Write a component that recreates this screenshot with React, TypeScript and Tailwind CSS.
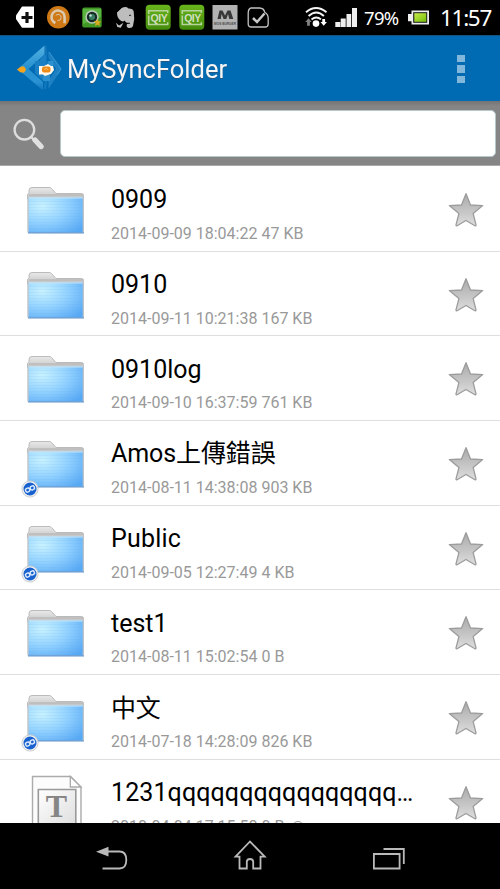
import React, { useState } from "react"

type Entry = {
    name: string
    info: string
    kind: "folder" | "shared" | "text"
    nameClass?: string
}

const entries: Entry[] = [
    { name: "0909", info: "2014-09-09 18:04:22 47 KB", kind: "folder" },
    { name: "0910", info: "2014-09-11 10:21:38 167 KB", kind: "folder" },
    { name: "0910log", info: "2014-09-10 16:37:59 761 KB", kind: "folder" },
    { name: "Amos上傳錯誤", info: "2014-08-11 14:38:08 903 KB", kind: "shared", nameClass: "tracking-[-0.1px]" },
    { name: "Public", info: "2014-09-05 12:27:49 4 KB", kind: "shared", nameClass: "tracking-[0.2px]" },
    { name: "test1", info: "2014-08-11 15:02:54 0 B", kind: "folder" },
    { name: "中文", info: "2014-07-18 14:28:09 826 KB", kind: "shared", nameClass: "tracking-[-0.3px]" },
    { name: "1231qqqqqqqqqqqqqqqq…", info: "2010-04-04 17:15:58 0 B", kind: "text", nameClass: "tracking-[0.1px]" },
]

function Gradients() {
    return (
        <svg className="absolute h-0 w-0" aria-hidden="true">
            <defs>
                <linearGradient id="tab" x1="0" y1="0" x2="0" y2="1">
                    <stop offset="0" stopColor="#e9e9e9" />
                    <stop offset="1" stopColor="#c4c4c4" />
                </linearGradient>
                <radialGradient id="front" cx="0.25" cy="0.25" r="0.95">
                    <stop offset="0" stopColor="#c9f2ff" />
                    <stop offset="0.5" stopColor="#93d2ff" />
                    <stop offset="1" stopColor="#58a9f4" />
                </radialGradient>
                <pattern id="lines" width="60" height="3" patternUnits="userSpaceOnUse">
                    <rect width="60" height="1" fill="#5aaef5" opacity="0.1" />
                </pattern>
                <linearGradient id="star" x1="0" y1="0" x2="0" y2="1">
                    <stop offset="0" stopColor="#aaaaaa" />
                    <stop offset="0.6" stopColor="#c8c8c8" />
                    <stop offset="1" stopColor="#dedede" />
                </linearGradient>
                <linearGradient id="paper" x1="0" y1="0" x2="1" y2="1">
                    <stop offset="0" stopColor="#ffffff" />
                    <stop offset="1" stopColor="#dddddd" />
                </linearGradient>
                <linearGradient id="logo" x1="0" y1="0" x2="0" y2="1">
                    <stop offset="0" stopColor="#55b3e2" />
                    <stop offset="0.5" stopColor="#2590d0" />
                    <stop offset="0.8" stopColor="#2a92d4" />
                    <stop offset="1" stopColor="#1174b9" />
                </linearGradient>
                <linearGradient id="charge" x1="0" y1="0" x2="1" y2="1">
                    <stop offset="0" stopColor="#c9ed4a" />
                    <stop offset="1" stopColor="#72bd08" />
                </linearGradient>
                <linearGradient id="qiy" x1="0" y1="0" x2="0" y2="1">
                    <stop offset="0" stopColor="#69b51c" />
                    <stop offset="1" stopColor="#438b0b" />
                </linearGradient>
            </defs>
        </svg>
    )
}

function FolderIcon({ shared }: { shared: boolean }) {
    return (
        <svg width="68" height="60" viewBox="0 0 68 60">
            <path d="M7.5 13V8.5l1.5-1.7V4.5Q9 1.5 12 1.5h17q1.5 0 2.5 1l4.5 5h25.5q2 0 2 2V13z" fill="url(#tab)" stroke="#b4b4b4" strokeWidth="0.9" />
            <path d="M9 9h54" stroke="#aeaeae" strokeWidth="1.2" />
            <path d="M7.3 10.5h56.7v36H7.3z" fill="#bfc3c7" />
            <path d="M8.7 11.5h54v35h-54z" fill="url(#front)" />
            <path d="M8.7 11.5h54v35h-54z" fill="url(#lines)" />
            <path d="M8.7 12h54" stroke="#d8f2ff" strokeWidth="0.8" />
            <path d="M8 46.8h56" stroke="#6195cd" strokeWidth="1.2" />
            {shared && (
                <g transform="translate(0 -3)">
                    <circle cx="10" cy="52" r="8.1" fill="#f1f1f1" stroke="#c2c5c9" strokeWidth="0.8" />
                    <circle cx="10" cy="52" r="6.5" fill="#1762cf" />
                    <g transform="rotate(-25 10 52)" fill="none" stroke="#dceaff" strokeWidth="1.4">
                        <rect x="5.3" y="50.1" width="4.2" height="3.8" rx="1.7" />
                        <rect x="10.5" y="50.1" width="4.2" height="3.8" rx="1.7" />
                        <path d="M9 52h2" />
                    </g>
                </g>
            )}
        </svg>
    )
}

function TextFileIcon() {
    return (
        <svg width="68" height="66" viewBox="0 0 68 66">
            <path d="M12.5 1.5h38L61 12v53H12.5z" fill="#fcfcfc" stroke="#ababab" strokeWidth="1.4" />
            <path d="M50.3 1.5V12H61z" fill="#ffffff" stroke="#aaaaaa" strokeWidth="1.3" />
            <path d="M18.3 14.5h37.5V52H18.3z" fill="url(#paper)" stroke="#999999" strokeWidth="1.6" />
            <text x="36.4" y="41.5" textAnchor="middle" fill="#858585" className="font-['Liberation_Serif',serif] text-[32px] font-bold">T</text>
        </svg>
    )
}

function Star() {
    return (
        <svg width="36" height="36" viewBox="0 0 36 36">
            <path d="M18 1.7l4.5 11.3 12.2.6-9.5 8 2.8 11.2q.1 1.3-1.1.9L18 28.5l-8.9 5.2q-1.2.3-1.1-.9l2.9-11.2-9.6-8 12.2-.6z" fill="url(#star)" stroke="#9c9c9c" strokeWidth="1.3" strokeLinejoin="round" />
        </svg>
    )
}

function StatusBar() {
    return (
        <div className="flex h-[35px] shrink-0 items-center bg-black text-white">
            <svg width="360" height="35" viewBox="0 0 360 35" className="shrink-0">
                {/* notifications */}
                <path d="M34 6.5v21.3H22L16 19v-3.5l6-9z" fill="#ffffff" />
                <path d="M27 12v11M21.5 17.5h11" stroke="#111111" strokeWidth="3.2" />
                <circle cx="58.3" cy="17.3" r="11.3" fill="#ce7816" />
                <path d="M55.4 23a6.5 6.5 0 1 1 9.2-5.8v6" fill="none" stroke="#dcc9af" strokeWidth="2.6" />
                <path d="M57.5 20.6q3.700.2 3.700-3.300a3.200 3.200 0 0 0-5.400-2" fill="none" stroke="#dcc9af" strokeWidth="1" />
                <rect x="82.2" y="7.6" width="19.5" height="20" rx="2.2" fill="#429824" />
                <path d="M83 9l18 0v8L83 24z" fill="#59b440" />
                <circle cx="92" cy="17" r="6.7" fill="#bdcbbb" />
                <circle cx="92" cy="17" r="5.2" fill="#152b26" />
                <circle cx="92" cy="17" r="3" fill="#397d64" />
                <circle cx="90.5" cy="15.5" r="1.2" fill="#c6ded3" />
                <path d="M97.5 19l1.2 2.3 2.7.2-2 1.8.5 2.8-2.4-1.3-2.5 1.1.7-2.8-1.8-2 2.7-.1z" fill="#d3a91d" />
                <g fill="#bdbdbd">
                    <path d="M117 12.8l5.2-5q4-1.7 6.3.8 4.7.2 5.2 2.9 1.4 7.2-.7 14.6-.8 2.4-4.5 1.8-2.2-.4-1.9-3 .5-1.6 3.1-.8v-1.3q-4.5.4-4.8-2.3-2.4 2.2-5-.5-2.9-2.4-2.9-7.2z" />
                    <path d="M122 8v5h-5z" />
                    <path d="M116 22.8l3 2.6 4.5-2.7-2.7 5-3.5-.6z" />
                </g>
                <path d="M129 15.7q1-1.4 2.2 0" fill="none" stroke="#222222" />
                {[145.7, 179.3].map((x) => (
                    <g key={x}>
                        <rect x={x} y="4.8" width="25" height="25" rx="4" fill="url(#qiy)" />
                        <path d={`M${x + 3} 14v-3.2h19V13M${x + 3} 15.5v9h19v-2.3`} fill="none" stroke="#b8d39b" strokeWidth="1.6" />
                        <text x={x + 13.2} y="21.5" textAnchor="middle" fill="#d0dfbd" className="font-['Liberation_Sans',sans-serif] text-[10.5px] font-bold tracking-[-0.5px]">QIY</text>
                    </g>
                ))}
                <rect x="212.5" y="5" width="25" height="24.5" fill="#b2b2b2" />
                <path d="M217.5 19l2-8.5h3l2.5 5 2.5-5h3l2.8 8.5h-4l-1.3-5-1.7 5h-2.7l-2-5-.8 5z" fill="#383838" />
                <text x="225" y="25.2" textAnchor="middle" fill="#4d4d4d" className="font-['Liberation_Sans',sans-serif] text-[3.2px] font-bold">MOS BURGER</text>
                <path d="M251 8h8.5q4.5.3 5.2 4.2 3.5 2.2 3.5 5.8v6.2q-.2 2.8-3 2.8h-14q-2.8 0-3-2.8v-11q.1-4.6 2.8-5.2z" fill="none" stroke="#c2c2c2" strokeWidth="1.3" />
                <path d="M253 18l4 4 7.5-8.5" fill="none" stroke="#c8c8c8" strokeWidth="2.5" />
                {/* wifi and signal */}
                <g fill="none" stroke="#f5f5f5" strokeWidth="1.9">
                    <path d="M306 12.2q10-8.4 20.5 0M308.6 16q7.7-7 15.3 0M311.5 19.4q4.8-4 9.5 0" />
                </g>
                <circle cx="316" cy="23.6" r="3.3" fill="#ffffff" />
                <path d="M308.5 18.3l3.2 3.6h-1.8v3.8h-2.8v-3.8h-1.8z" fill="#808080" />
                <path d="M323.7 25.7l3.2-3.6h-1.8v-3h-2.8v3h-1.8z" fill="#ffffff" />
                <path d="M335.3 22h5v5h-5zM340.7 18.5h5V27h-5zM346.5 14h4.7v13h-4.7zM352 8h5v19h-5z" fill="#eeeeee" />
            </svg>
            <span className="ml-[4px] w-[44px] shrink-0 pt-px font-['Noto_Sans',sans-serif] text-[18.5px] leading-[34px] tracking-[-0.7px]">79%</span>
            <svg width="22" height="18" viewBox="0 0 22 18" className="shrink-0">
                <path d="M3.5 1.5H21v14H3.5v-3.2H0V5h3.5z" fill="#eeeeee" />
                <path d="M5.2 3.2h14v10.6h-14z" fill="#161616" />
                <path d="M6.3 4.2h12v8.6h-12z" fill="url(#charge)" />
            </svg>
            <span className="ml-[10px] shrink-0 pt-px font-['Noto_Sans',sans-serif] text-[22.5px] leading-[34px] tracking-[-1.3px]">11:57</span>
        </div>
    )
}

function Header() {
    return (
        <header className="flex h-[66px] shrink-0 items-center justify-between border-t border-[#17527b] bg-[#006bb2] pl-[15px] pr-[35px]">
            <div className="flex items-center">
                <svg width="50" height="50" viewBox="0 0 50 50">
                    <path d="M29.5 1.5v9L13.5 25l14.5 13v8.5L5 27v-4z" fill="url(#logo)" />
                    <path d="M20 17h4l4.5-6h3v26l-4-1-7.5-7z" fill="#1b80c3" />
                    <path d="M33.5 7l13 18-13 20v-8l7.5-12-7.5-11z" fill="#1c80c2" />
                    <path d="M34 8l12 17-4 6" fill="none" stroke="#3a9ad3" strokeWidth="0.9" />
                    <path d="M30.5 2l1 9" stroke="#1b79ba" strokeWidth="1.6" />
                    <path d="M31 36l-1 9" stroke="#157abd" strokeWidth="2" />
                    <path d="M32.5 17h6v5h-6zM28 31h7v6h-7z" fill="#2a90cf" />
                    <path d="M24 22h5l4-2 3 2h2l1 4-3 4-6 2-2-1.5h-4z" fill="#fff8ec" />
                    <rect x="27" y="22.5" width="8.5" height="6" rx="2" fill="#ee8b18" />
                    <path d="M29.5 26l1.7-2 2 2" stroke="#fbc46a" fill="none" />
                    <path d="M2 25.4l4-3h3l1.7 2v2.3l-2 2-3.5-.4z" fill="#f5a51c" />
                </svg>
                <span className="ml-[2px] text-[25.5px] leading-8 text-[#f6f6f6] drop-shadow-[0_1px_0_#235984]">MySyncFolder</span>
            </div>
            <button className="flex flex-col gap-[3px]" type="button" aria-label="Menu">
                <i className="h-[7px] w-2 bg-[#82b7dc]" />
                <i className="h-2 w-2 bg-[#82b7dc]" />
                <i className="h-[7px] w-2 bg-[#82b7dc]" />
            </button>
        </header>
    )
}

function SearchBar() {
    const [query, setQuery] = useState("")

    return (
        <div className="flex h-[65px] shrink-0 items-center border-b border-[#aaa] bg-[#858585] bg-linear-to-b from-[#747474] to-[#858585] to-8% pl-[12px] pr-1">
            <svg width="34" height="36" viewBox="0 0 34 36" fill="none">
                <circle cx="12.4" cy="14.7" r="9.8" stroke="#dddddd" strokeWidth="2.3" />
                <path d="M19.4 22.2l3 3" stroke="#dddddd" strokeWidth="2.2" />
                <path d="M23 25l6 6.5" stroke="#e1e1e1" strokeWidth="5.4" strokeLinecap="round" />
            </svg>
            <input
                className="ml-[14px] mt-px h-[47px] min-w-0 flex-1 rounded-[5px] border border-[#b7c8cd] bg-white px-3 text-xl outline-none"
                aria-label="Search"
                value={query}
                onChange={(e) => setQuery(e.target.value)}
            />
        </div>
    )
}

function Row({ entry }: { entry: Entry }) {
    return (
        <li className="flex h-[84.7px] shrink-0 items-start border-b border-[#dedede]">
            <div className="ml-5 mt-[19px] w-[68px] shrink-0">
                {entry.kind === "text"
                    ? <div className="-mt-1"><TextFileIcon /></div>
                    : <FolderIcon shared={entry.kind === "shared"} />}
            </div>
            <div className="ml-[23px] mt-[17.4px] w-[310px] shrink-0">
                <div className={"whitespace-nowrap text-[25px] leading-8 text-black " + (entry.nameClass || "")}>{entry.name}</div>
                <div className="mt-[7.5px] flex items-center gap-2 text-[16px] leading-5 text-[#999]">
                    {entry.info}
                    {entry.kind === "text" && <i className="h-3 w-3 rounded-full border border-[#999]" />}
                </div>
            </div>
            <div className="ml-[27px] mt-[25px]">
                <Star />
            </div>
        </li>
    )
}

function NavBar() {
    return (
        <nav className="flex h-[66px] shrink-0 items-center bg-black">
            <svg width="500" height="66" viewBox="0 0 500 66" fill="none" stroke="#b9b9b9" strokeWidth="1.8">
                <path d="M107 28.5h12.5q6.8 0 6.8 8.5t-6.8 8.5h-17" />
                <path d="M96 28.7l12.5-4.9v9.6z" fill="#b9b9b9" stroke="none" />
                <path d="M235.5 33.7L250 18.5l14.7 15.2h-4.2v11.8h-7.3v-7q-.4-2.5-3.2-2.5t-3.2 2.5v7h-7.3V33.7z" />
                <path d="M373.9 31h25.7v14.5h-25.7z" />
                <path d="M383.5 26h20.3v15" />
            </svg>
        </nav>
    )
}

function App() {
    return (
        <div className="flex h-[889px] w-[500px] flex-col overflow-hidden bg-white font-['Roboto','Noto_Sans_CJK_TC',sans-serif]">
            <Gradients />
            <StatusBar />
            <Header />
            <SearchBar />
            <ul className="flex min-h-0 flex-1 flex-col overflow-hidden pt-px">
                {entries.map((entry) => (
                    <Row key={entry.name} entry={entry} />
                ))}
            </ul>
            <NavBar />
        </div>
    )
}

export default App
